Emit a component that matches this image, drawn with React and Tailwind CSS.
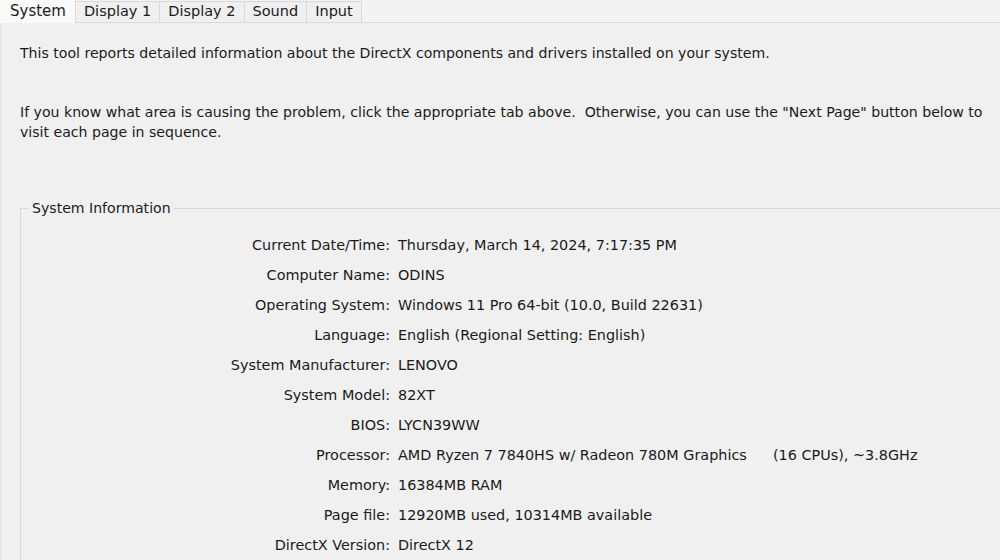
import React from "react";

const tabs = ["System", "Display 1", "Display 2", "Sound", "Input"];

const rows = [
  ["Current Date/Time:", "Thursday, March 14, 2024, 7:17:35 PM"],
  ["Computer Name:", "ODINS"],
  ["Operating System:", "Windows 11 Pro 64-bit (10.0, Build 22631)"],
  ["Language:", "English (Regional Setting: English)"],
  ["System Manufacturer:", "LENOVO"],
  ["System Model:", "82XT"],
  ["BIOS:", "LYCN39WW"],
  ["Processor:", "AMD Ryzen 7 7840HS w/ Radeon 780M Graphics", "(16 CPUs), ~3.8GHz"],
  ["Memory:", "16384MB RAM"],
  ["Page file:", "12920MB used, 10314MB available"],
  ["DirectX Version:", "DirectX 12"],
];

function TabStrip() {
  return (
    <div className="flex h-[23px] items-end border-b border-[#d9d9d9] bg-[#f3f3f3]">
      {tabs.map((t, i) => (
        <div
          key={t}
          className={
            i === 0
              ? "flex h-[23px] items-center bg-[#fafafa] pl-[10px] pr-[9px] text-[15px] text-[#1a1a1a] -mb-px border-r border-[#d9d9d9]"
              : "flex h-[21px] items-center border-r border-t border-[#d9d9d9] bg-[#f0f0f0] px-[8px] text-[14.5px] text-[#1a1a1a]"
          }
        >
          {t}
        </div>
      ))}
    </div>
  );
}

export default function App() {
  return (
    <div
      className="h-[560px] w-[1000px] overflow-hidden bg-[#f0f0f0] text-[#1a1a1a]"
      style={{ fontFamily: '"DejaVu Sans", Verdana, sans-serif' }}
    >
      <TabStrip />
      <div className="h-[537px] border-l border-[#e2e2e2] pl-[19px] text-[14.1px]">
        <p className="pt-[20px] leading-[20px]">
          This tool reports detailed information about the DirectX components and drivers installed on your system.
        </p>
        <p className="mt-[39px] pr-[8px] leading-[20px]">
          If you know what area is causing the problem, click the appropriate tab above.&nbsp; Otherwise, you can use the "Next Page" button below to visit each page in sequence.
        </p>

        <fieldset className="mt-[56px] w-[1000px] border border-r-0 border-[#d7d7d7] pb-4">
          <legend className="ml-[8px] px-[3px] leading-[20px]">System Information</legend>
          <div className="mt-[12px] grid grid-cols-[369px_1fr] gap-x-[8px] text-[14.4px]">
            {rows.map(([label, value, extra]) => (
              <React.Fragment key={label}>
                <div className="h-[30px] text-right leading-[30px]">{label}</div>
                <div className="h-[30px] leading-[30px]">
                  {extra ? (
                    <>
                      <span className="inline-block w-[375px]">{value}</span>
                      <span>{extra}</span>
                    </>
                  ) : (
                    value
                  )}
                </div>
              </React.Fragment>
            ))}
          </div>
        </fieldset>
      </div>
    </div>
  );
}
